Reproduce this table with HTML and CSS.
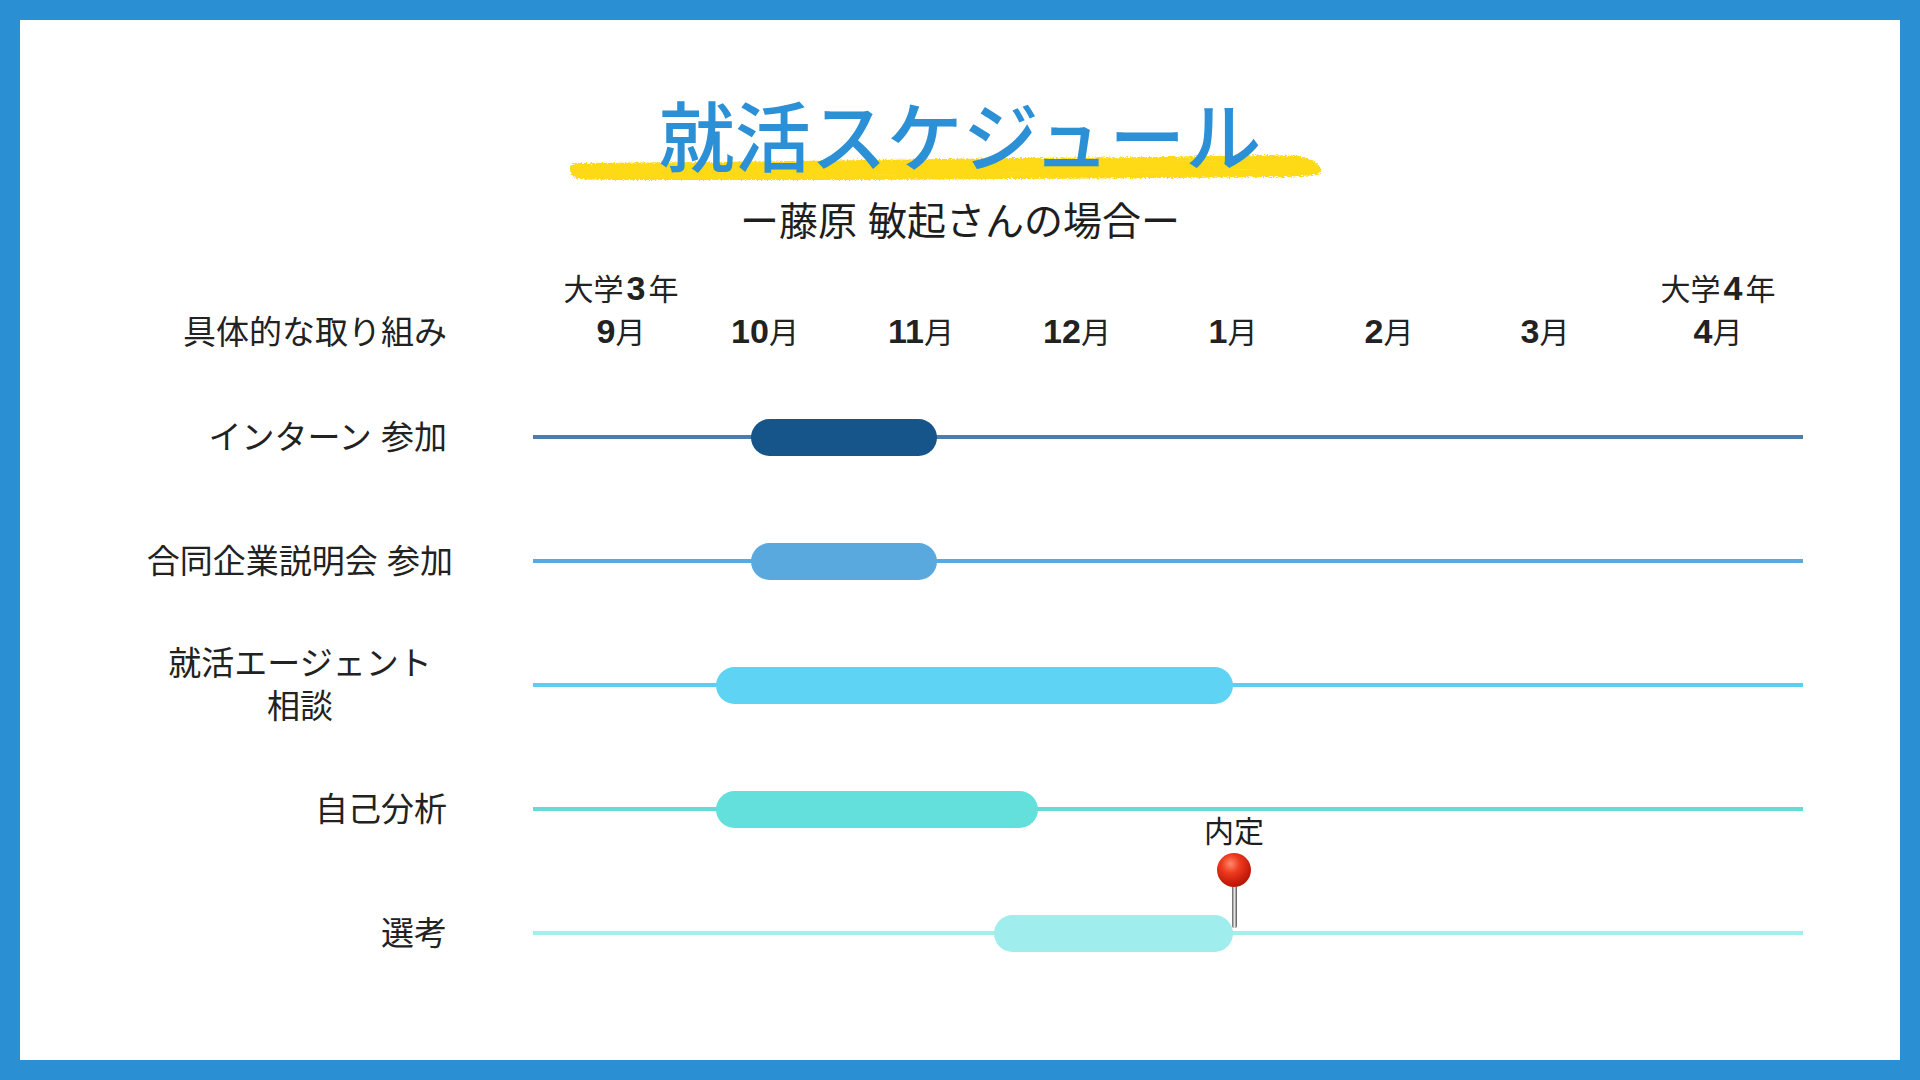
FILE: index.html
```html
<!DOCTYPE html>
<html lang="ja">
<head>
<meta charset="utf-8">
<title>就活スケジュール</title>
<link rel="stylesheet" href="styles.css">
</head>
<body>
<div class="frame">
  <header class="head">
    <div class="title-wrap">
      <svg class="brush" width="762" height="34" viewBox="0 0 762 34" aria-hidden="true">
        <defs>
          <filter id="rough" x="-2%" y="-40%" width="104%" height="180%">
            <feTurbulence type="fractalNoise" baseFrequency="0.5 0.9" numOctaves="2" seed="4" result="n"/>
            <feDisplacementMap in="SourceGraphic" in2="n" scale="5" xChannelSelector="R" yChannelSelector="G"/>
          </filter>
        </defs>
        <path filter="url(#rough)" fill="#fdd917" d="M5,17 C5,13 8,12 14,12 L150,11 L300,9 L450,7 L600,6 L700,4 L734,5 L750,10 L757,20 L752,24 L720,26 L600,27 L450,28 L300,29 L150,29 L44,29 L14,28 C7,27 5,22 5,17 Z"/>
        <path fill="#fde866" opacity="0.6" d="M300,24 L320,23.5 L340,24.5 Z M420,22 L450,21.5 L470,22.5 Z M560,21 L590,20.5 L610,21.5 Z M650,19 L680,18 L700,19 Z M600,10 L630,9.5 L660,10.5 Z"/>
      </svg>
      <h1 class="title">就活スケジュール</h1>
    </div>
    <p class="subtitle">ー藤原 敏起さんの場合ー</p>
  </header>

  <section class="chart">
    <div class="row header-row">
      <div class="head-label">具体的な取り組み</div>
      <div class="months">
        <div class="mcell edge"><span class="yr">大学<b>3</b>年</span><span class="mo"><b>9</b>月</span></div>
        <div class="mcell first"><span class="mo"><b>10</b>月</span></div>
        <div class="mcell"><span class="mo"><b>11</b>月</span></div>
        <div class="mcell"><span class="mo"><b>12</b>月</span></div>
        <div class="mcell"><span class="mo"><b>1</b>月</span></div>
        <div class="mcell"><span class="mo"><b>2</b>月</span></div>
        <div class="mcell"><span class="mo"><b>3</b>月</span></div>
        <div class="mcell edge last"><span class="yr">大学<b>4</b>年</span><span class="mo"><b>4</b>月</span></div>
      </div>
    </div>

    <div class="row task t1">
      <div class="label">インターン 参加</div>
      <div class="track"><div class="bar" style="margin-left:218px;width:186px"></div></div>
    </div>
    <div class="row task t2">
      <div class="label shift">合同企業説明会 参加</div>
      <div class="track"><div class="bar" style="margin-left:218px;width:186px"></div></div>
    </div>
    <div class="row task t3">
      <div class="label two">就活エージェント<br>相談</div>
      <div class="track"><div class="bar" style="margin-left:183px;width:517px"></div></div>
    </div>
    <div class="row task t4">
      <div class="label">自己分析</div>
      <div class="track"><div class="bar" style="margin-left:183px;width:322px"></div></div>
    </div>
    <div class="row task t5">
      <div class="label">選考</div>
      <div class="track">
        <div class="bar" style="margin-left:461px;width:239px"></div>
        <div class="pin">
          <span class="pin-label">内定</span>
          <span class="ball"></span>
          <span class="needle"></span>
        </div>
      </div>
    </div>
  </section>
</div>
</body>
</html>
```

FILE: styles.css
```css
html, body {
  margin: 0;
  padding: 0;
}

body {
  font-family: "Liberation Sans", "Noto Sans CJK JP", sans-serif;
  color: #222222;
  background: #ffffff;
}

.frame {
  width: 1920px;
  height: 1080px;
  box-sizing: border-box;
  border: 20px solid #2b8fd4;
  background: #ffffff;
  overflow: hidden;
}

/* ---------- heading ---------- */
.title-wrap {
  position: relative;
  margin-top: 76px;
  height: 75px;
  text-align: center;
}

.brush {
  position: absolute;
  left: 545px;
  top: 55px;
}

.title {
  position: relative;
  margin: 0;
  font-family: "Noto Sans CJK JP", sans-serif;
  font-size: 76px;
  line-height: 75px;
  font-weight: 500;
  color: #2b90d5;
}

.subtitle {
  margin: 31px 0 0;
  text-align: center;
  font-size: 39px;
  line-height: 39px;
  color: #1e1e1e;
}

/* ---------- chart ---------- */
.chart {
  margin-top: 30px;
}

.row {
  display: grid;
  grid-template-columns: 427px 1270px;
  column-gap: 86px;
}

.header-row {
  align-items: end;
  margin-bottom: 24px;
}

.head-label {
  text-align: right;
  font-size: 33px;
  line-height: 36px;
}

.months {
  display: flex;
  align-items: flex-end;
  padding-left: 28px;
}

.mcell {
  display: flex;
  flex-direction: column;
  align-items: center;
  width: 156px;
  flex: none;
}

.mcell.edge {
  width: 120px;
}

.mcell.first {
  margin-left: 6px;
}

.mcell.last {
  margin-left: 35px;
}

.yr,
.mo {
  font-size: 30px;
  line-height: 36px;
  white-space: nowrap;
}

.yr {
  margin-bottom: 6px;
}

.yr b,
.mo b {
  font-family: "Liberation Sans", sans-serif;
  font-size: 34px;
  line-height: 1;
  font-weight: 700;
}

.yr b {
  margin: 0 3px;
}

/* ---------- task rows ---------- */
.task {
  height: 124px;
  align-items: center;
}

.label {
  text-align: right;
  font-size: 33px;
  line-height: 43px;
  white-space: nowrap;
}

.label.shift {
  margin-right: -6px;
}

.label.two {
  justify-self: end;
  width: 294px;
  text-align: center;
}

.track {
  position: relative;
  height: 124px;
  display: flex;
  align-items: center;
  background: linear-gradient(var(--line), var(--line)) center / 100% 4px no-repeat;
}

.bar {
  flex: none;
  height: 37px;
  border-radius: 19px;
  background: var(--bar);
}

.t1 { --bar: #16558a; --line: #4f7dab; }
.t2 { --bar: #5aa9de; --line: #5aa9de; }
.t3 { --bar: #5fd3f3; --line: #5ccfee; }
.t4 { --bar: #63e0dc; --line: #63dcd9; }
.t5 { --bar: #a0edee; --line: #a5eeee; }

/* ---------- pin ---------- */
.pin {
  position: absolute;
  left: 701px;
  top: -57px;
  transform: translateX(-50%);
  display: flex;
  flex-direction: column;
  align-items: center;
}

.pin-label {
  font-family: "Noto Sans CJK JP", sans-serif;
  font-size: 30px;
  line-height: 30px;
  color: #1e1e1e;
  white-space: nowrap;
}

.ball {
  position: relative;
  z-index: 1;
  width: 34px;
  height: 34px;
  margin-top: 9px;
  border-radius: 50%;
  background: radial-gradient(circle at 40% 32%, #ff8a6a 0%, #ee3a1e 30%, #c81d0c 62%, #8c0e06 100%);
}

.needle {
  width: 5px;
  height: 41px;
  border-radius: 0 0 2px 2px;
  background: linear-gradient(90deg, #5e5e5e, #e6e6e6 50%, #4e4e4e);
}
```
